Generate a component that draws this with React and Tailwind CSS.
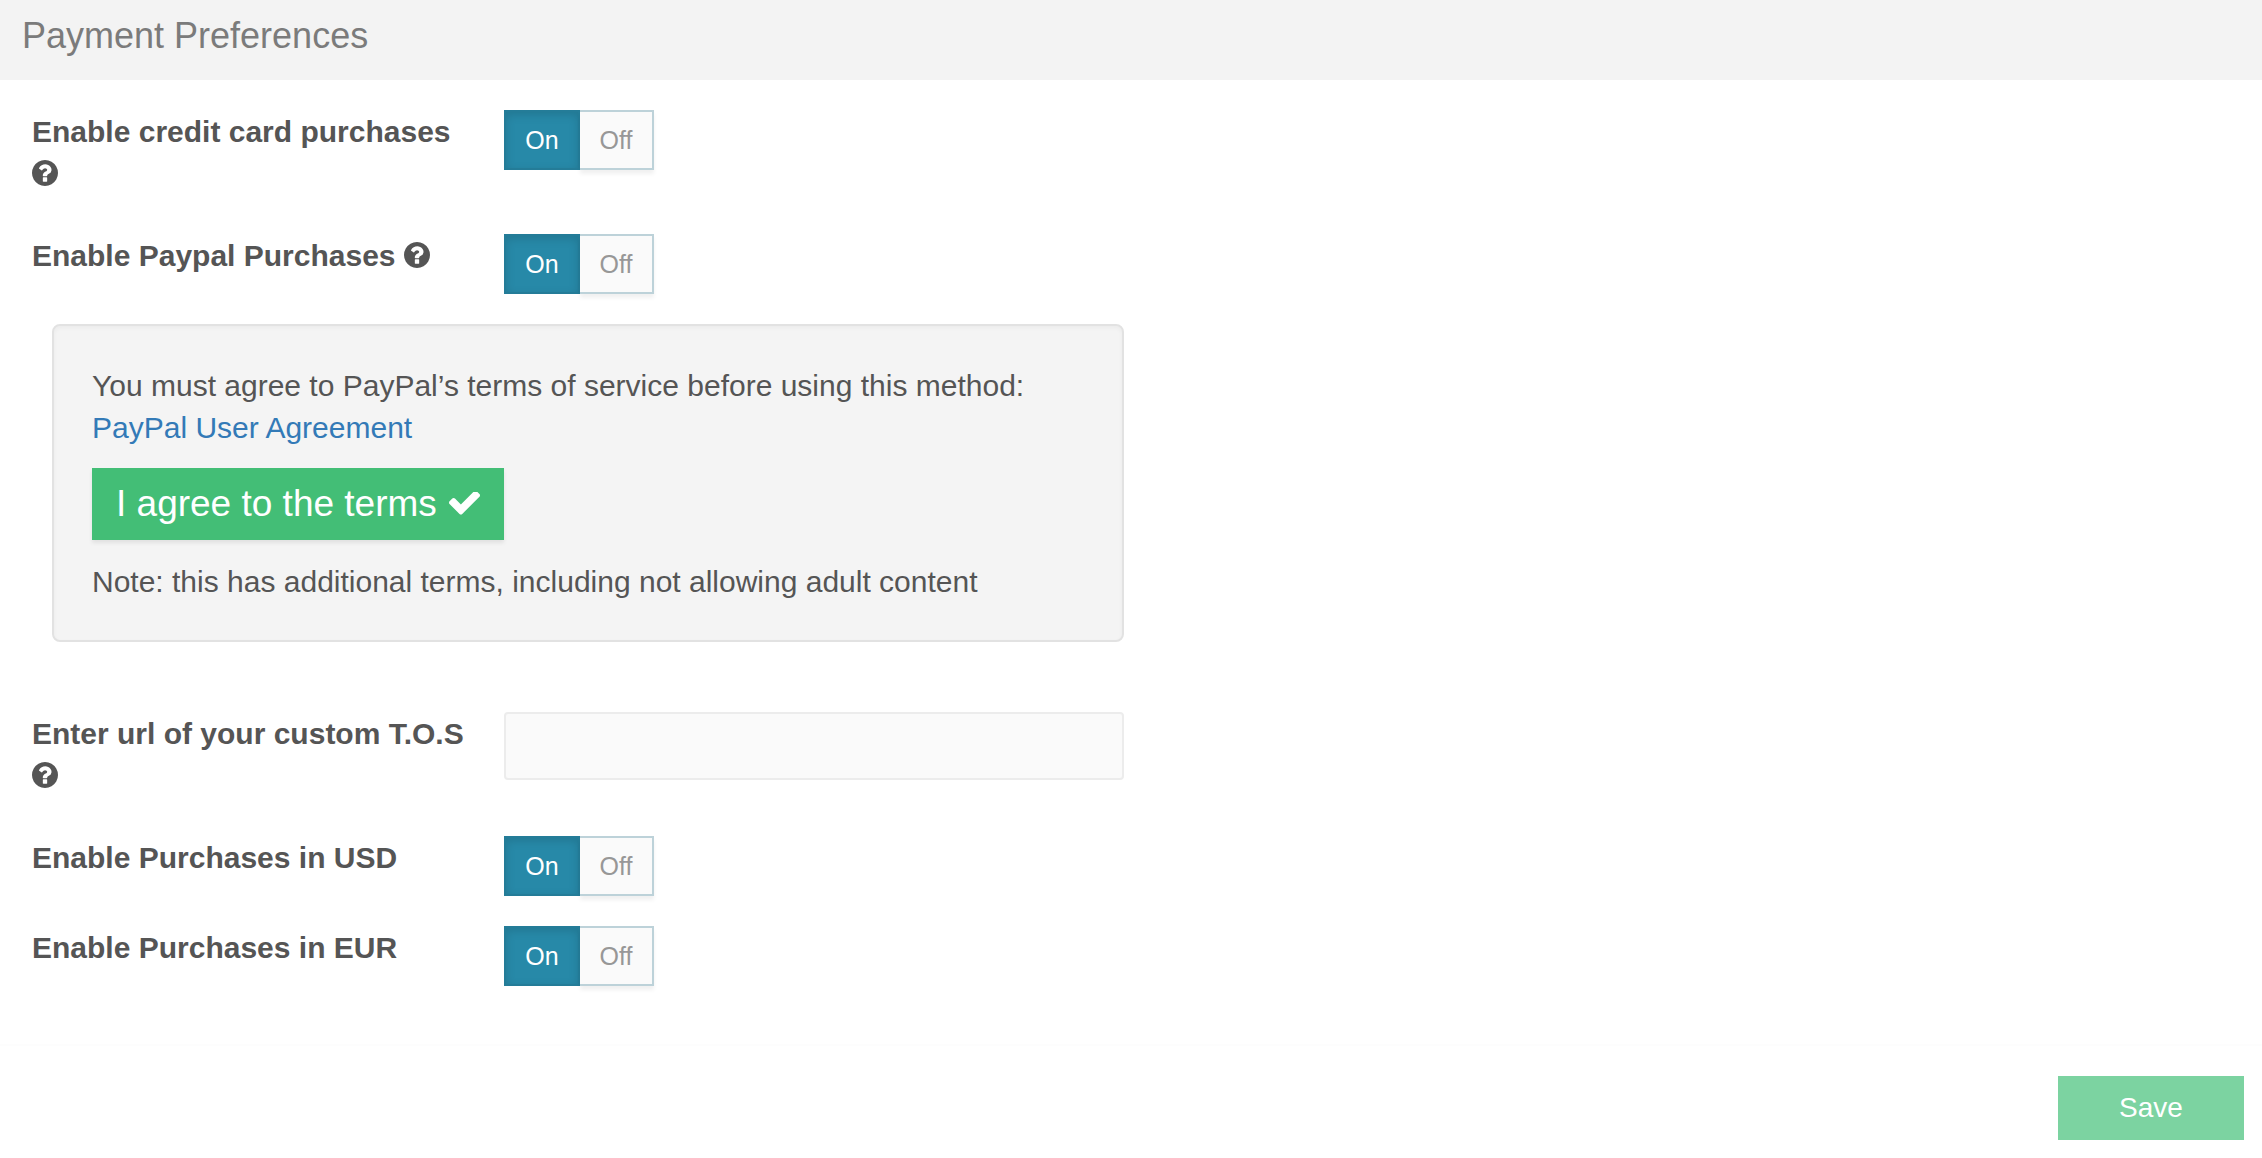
import React, { useState } from "react";

function QuestionIcon() {
    return (
        <svg viewBox="128 128 1536 1536" fill="currentColor" aria-hidden="true" className="w-[26px] h-[26px] inline-block align-[-2px]">
            <path d="M1024 1376v-192q0-14-9-23t-23-9h-192q-14 0-23 9t-9 23v192q0 14 9 23t23 9h192q14 0 23-9t9-23zm256-672q0-88-55.5-163t-138.5-116-170-41q-243 0-371 213-15 24 8 42l132 100q7 6 19 6 16 0 25-12 53-68 86-92 34-24 86-24 48 0 85.5 26t37.5 59q0 38-20 61t-68 45q-63 28-115.5 86.5t-52.5 125.5v36q0 14 9 23t23 9h192q14 0 23-9t9-23q0-19 21.5-49.5t54.5-49.5q32-18 49-28.5t46-35 44.5-48 28-60.5 12.5-81zm384 192q0 209-103 385.5t-279.5 279.5-385.5 103-385.5-103-279.5-279.5-103-385.5 103-385.5 279.5-279.5 385.5-103 385.5 103 279.5 279.5 103 385.5z" />
        </svg>
    );
}

function CheckIcon() {
    return (
        <svg viewBox="121 400 1550 1190" fill="currentColor" aria-hidden="true" className="w-[31px] h-[24px] inline-block">
            <path d="M1671 566q0 40-28 68l-724 724-136 136q-28 28-68 28t-68-28l-136-136-362-362q-28-28-28-68t28-68l136-136q28-28 68-28t68 28l294 295 656-657q28-28 68-28t68 28l136 136q28 28 28 68z" />
        </svg>
    );
}

function Toggle({ value, onChange, labelId }) {
    const onClass = "w-[76px] bg-[#2789a8] text-white border-2 border-[#247c98] shadow-[inset_0_3px_10px_rgba(0,0,0,0.13)]";
    const offClass = "w-[74px] bg-[#fafafa] text-[#979797] border-2 border-l-0 border-[#bdd2d9] shadow-[0_4px_4px_rgba(0,0,0,0.06)]";

    return (
        <div role="group" aria-labelledby={labelId} className="flex h-[60px] text-[25px] leading-8">
            <button type="button" aria-pressed={value} onClick={() => onChange(true)} className={value ? onClass : offClass}>
                On
            </button>
            <button type="button" aria-pressed={!value} onClick={() => onChange(false)} className={value ? offClass : onClass}>
                Off
            </button>
        </div>
    );
}

function Row({ id, label, help, htmlFor, children }) {
    const Label = htmlFor ? "label" : "div";

    return (
        <div className="flex items-start mb-[30px]">
            <Label id={id} htmlFor={htmlFor} className="w-[442px] mr-[30px] shrink-0 pt-px pb-[9px] text-[30px] leading-[42px] font-bold">
                {label} {help && <QuestionIcon />}
            </Label>
            {children}
        </div>
    );
}

export default function App() {
    const [prefs, setPrefs] = useState({ card: true, paypal: true, usd: true, eur: true });
    const [tosUrl, setTosUrl] = useState("");

    const update = (key) => (value) => setPrefs({ ...prefs, [key]: value });

    return (
        <div className="min-h-screen bg-white text-[#555] font-['Liberation_Sans',Arial,sans-serif]">
            <header className="h-20 px-[22px] pt-4 bg-[#f3f3f3]">
                <h1 className="text-4xl leading-10 text-[#7b7b7b]">Payment Preferences</h1>
            </header>

            <form onSubmit={(e) => e.preventDefault()}>
                <div className="w-1/2 pl-8 pr-[7px] pt-[30px]">
                    <Row id="card-label" label="Enable credit card purchases" help>
                        <Toggle labelId="card-label" value={prefs.card} onChange={update("card")} />
                    </Row>
                    <Row id="paypal-label" label="Enable Paypal Purchases" help>
                        <Toggle labelId="paypal-label" value={prefs.paypal} onChange={update("paypal")} />
                    </Row>

                    {/* paypal terms */}
                    <div className="ml-5 mb-[70px] px-[38px] pt-[39px] pb-[37px] border-2 border-[#e2e2e2] rounded-lg bg-[#f4f4f4] shadow-[inset_0_2px_4px_rgba(0,0,0,0.04)] text-[30px] leading-[42px]">
                        <p>You must agree to PayPal’s terms of service before using this method:</p>
                        <a href="#agreement" className="text-[#337ab7]">PayPal User Agreement</a>
                        <button type="button" className="flex items-center gap-3 h-[72px] mt-[19px] mb-[21px] px-6 bg-[#43be76] text-white text-[37px] shadow-[0_3px_4px_rgba(0,0,0,0.08)]">
                            I agree to the terms
                            <CheckIcon />
                        </button>
                        <p>Note: this has additional terms, including not allowing adult content</p>
                    </div>

                    <Row label="Enter url of your custom T.O.S" help htmlFor="tos-url">
                        <input
                            id="tos-url"
                            type="text"
                            value={tosUrl}
                            onChange={(e) => setTosUrl(e.target.value)}
                            className="flex-1 min-w-0 h-[68px] px-5 border-2 border-[#ececec] rounded bg-[#fafafa] text-[28px]"
                        />
                    </Row>
                    <Row id="usd-label" label="Enable Purchases in USD">
                        <Toggle labelId="usd-label" value={prefs.usd} onChange={update("usd")} />
                    </Row>
                    <Row id="eur-label" label="Enable Purchases in EUR">
                        <Toggle labelId="eur-label" value={prefs.eur} onChange={update("eur")} />
                    </Row>
                </div>

                <div className="flex justify-end mt-[58px] pt-[30px] pr-[18px] pb-[18px] border-t-2 border-[#fdfdfd]">
                    <button type="submit" className="w-[186px] h-16 bg-[#7cd3a1] text-white text-[28px] leading-8">
                        Save
                    </button>
                </div>
            </form>
        </div>
    );
}
